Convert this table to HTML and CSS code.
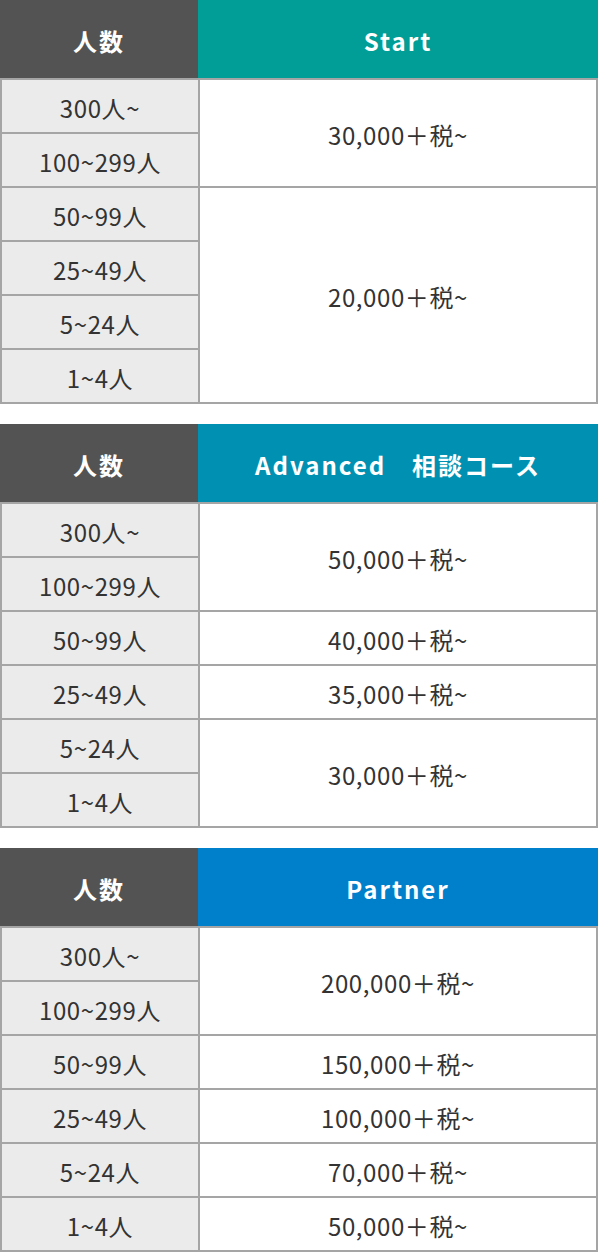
FILE: index.html
```html
<!DOCTYPE html>
<html lang="ja">
<head>
  <meta charset="UTF-8" />
  <meta name="viewport" content="width=device-width, initial-scale=1.0"/>
  <title>料金プラン</title>
  <link rel="stylesheet" href="styles.css">
</head>
<body>
  <section class="plan plan-start">
    <div class="plan-head">
      <div class="head-count">人数</div>
      <div class="head-name">Start</div>
    </div>
    <div class="plan-body">
      <div class="count">300人~</div>
      <div class="price span-2">30,000＋税~</div>
      <div class="count">100~299人</div>
      <div class="count">50~99人</div>
      <div class="price span-4">20,000＋税~</div>
      <div class="count">25~49人</div>
      <div class="count">5~24人</div>
      <div class="count">1~4人</div>
    </div>
  </section>

  <section class="plan plan-advanced">
    <div class="plan-head">
      <div class="head-count">人数</div>
      <div class="head-name">Advanced　相談コース</div>
    </div>
    <div class="plan-body">
      <div class="count">300人~</div>
      <div class="price span-2">50,000＋税~</div>
      <div class="count">100~299人</div>
      <div class="count">50~99人</div>
      <div class="price">40,000＋税~</div>
      <div class="count">25~49人</div>
      <div class="price">35,000＋税~</div>
      <div class="count">5~24人</div>
      <div class="price span-2">30,000＋税~</div>
      <div class="count">1~4人</div>
    </div>
  </section>

  <section class="plan plan-partner">
    <div class="plan-head">
      <div class="head-count">人数</div>
      <div class="head-name">Partner</div>
    </div>
    <div class="plan-body">
      <div class="count">300人~</div>
      <div class="price span-2">200,000＋税~</div>
      <div class="count">100~299人</div>
      <div class="count">50~99人</div>
      <div class="price">150,000＋税~</div>
      <div class="count">25~49人</div>
      <div class="price">100,000＋税~</div>
      <div class="count">5~24人</div>
      <div class="price">70,000＋税~</div>
      <div class="count">1~4人</div>
      <div class="price">50,000＋税~</div>
    </div>
  </section>
</body>
</html>
```

FILE: styles.css
```css
body {
  margin: 0;
  font-family: "Noto Sans CJK JP", "Noto Sans", sans-serif;
  color: #333;
  background: #fff;
}

.plan {
  width: 598px;
  margin-bottom: 20px;
}

.plan:last-child {
  margin-bottom: 0;
}

.plan-head {
  display: flex;
  height: 78px;
  color: #fff;
  font-size: 24px;
  font-weight: 700;
  letter-spacing: 2px;
}

.head-count,
.head-name {
  display: flex;
  align-items: center;
  justify-content: center;
  padding-top: 3px;
}

.head-count {
  width: 198px;
  background: #535353;
}

.head-name {
  flex: 1;
}

.plan-start .head-name {
  background: #009e96;
}

.plan-advanced .head-name {
  background: #0091b2;
}

.plan-partner .head-name {
  background: #0080cb;
}

.plan-body {
  display: grid;
  grid-template-columns: 196px 1fr;
  grid-auto-rows: 52px;
  gap: 2px;
  padding: 2px;
  background: #a5a5a5;
  font-size: 24px;
  letter-spacing: 0.6px;
}

.count,
.price {
  display: flex;
  align-items: center;
  justify-content: center;
  padding-top: 2px;
}

.count {
  grid-column: 1;
  background: #ebebeb;
}

.price {
  grid-column: 2;
  background: #fff;
}

.span-2 {
  grid-row: span 2;
}

.span-4 {
  grid-row: span 4;
}
```
